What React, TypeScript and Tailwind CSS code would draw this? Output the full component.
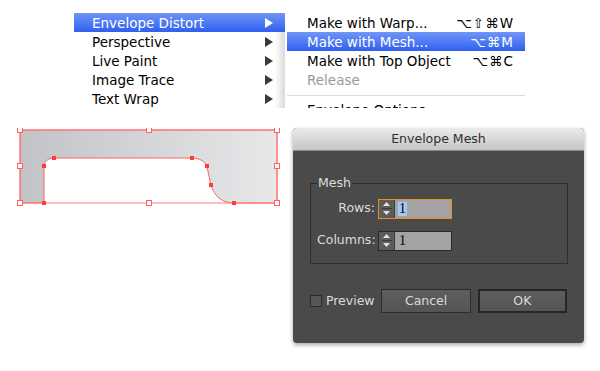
import React from "react";

const leftItems = ["Envelope Distort", "Perspective", "Live Paint", "Image Trace", "Text Wrap"];

const subItems = [
    { label: "Make with Warp...", keys: "⌥⇧⌘W" },
    { label: "Make with Mesh...", keys: "⌥⌘M", active: true },
    { label: "Make with Top Object", keys: "⌥⌘C" },
    { label: "Release", keys: "", disabled: true },
];

const Arrow = ({ white }: { white?: boolean }) => (
    <svg width="8" height="10" viewBox="0 0 8 10">
        <path d="M0 0 L8 5 L0 10 Z" fill={white ? "#ffffff" : "#3a3a3a"} />
    </svg>
);

const Spinner = ({ value, focused }: { value: string; focused?: boolean }) => (
    <div
        className={`flex h-[20px] w-[74px] border ${
            focused ? "border-[#e8901e]" : "border-[#2a2a2a]"
        }`}
    >
        <div className="flex w-[16px] flex-col items-center justify-center gap-[2px] border-r border-[#3a3a3a] bg-[#5c5c5c]">
            <svg width="7" height="4" viewBox="0 0 7 4">
                <path d="M0 4 L3.5 0 L7 4 Z" fill="#e4e4e4" />
            </svg>
            <div className="h-px w-[10px] bg-[#3c3c3c]" />
            <svg width="7" height="4" viewBox="0 0 7 4">
                <path d="M0 0 L3.5 4 L7 0 Z" fill="#e4e4e4" />
            </svg>
        </div>
        <div className="flex flex-1 items-center bg-[#a3a3a3] pl-[3px] font-['Liberation_Serif',serif] text-[14px] leading-none text-black">
            <span className={focused ? "bg-[#a8c6f4] px-px" : "px-px"}>{value}</span>
        </div>
    </div>
);

const Button = ({ label, primary }: { label: string; primary?: boolean }) => (
    <div
        className={`flex h-[24px] w-[90px] items-center justify-center bg-linear-to-b from-[#5e5e5e] to-[#545454] text-[12.5px] text-[#dcdcdc] ${
            primary ? "border-2 border-[#262626]" : "border border-[#2c2c2c]"
        }`}
    >
        {label}
    </div>
);

export default function App() {
    return (
        <div className="flex h-[371px] w-[600px] flex-col overflow-hidden bg-white font-['DejaVu_Sans',sans-serif]">
            {/* menus */}
            <div className="flex h-[108px] shrink-0 overflow-hidden pl-[74px] pt-[13px] text-[13.5px] text-black">
                <div className="relative w-[211px]">
                    {leftItems.map((item, i) => (
                        <div
                            key={item}
                            className={`flex h-[19px] items-center justify-between pl-[18px] pr-[12px] pt-px ${
                                i === 0 ? "bg-linear-to-b from-[#7195f7] to-[#2f5fee] text-white" : ""
                            }`}
                        >
                            <span>{item}</span>
                            <Arrow white={i === 0} />
                        </div>
                    ))}
                    <div className="absolute bottom-0 right-0 top-[19px] w-[10px] bg-linear-to-r from-transparent to-black/15" />
                </div>
                <div className="w-[240px] pl-[2px]">
                    {subItems.map((item) => (
                        <div
                            key={item.label}
                            className={`flex h-[19px] items-center justify-between pl-[20px] pr-[11px] pt-px ${
                                item.active ? "bg-linear-to-b from-[#7195f7] to-[#2f5fee] text-white" : ""
                            } ${item.disabled ? "text-[#9a9a9a]" : ""}`}
                        >
                            <span>{item.label}</span>
                            <span className="tracking-[1px]">{item.keys}</span>
                        </div>
                    ))}
                    <div className="flex h-[12px] items-center">
                        <div className="h-px w-full bg-[#dadada]" />
                    </div>
                    <div className="flex h-[19px] items-center pl-[20px]">Envelope Options...</div>
                </div>
            </div>

            <div className="mt-[20px] flex">
                {/* envelope shape */}
                <svg width="293" height="90" viewBox="0 128 293 90" className="shrink-0">
                    <defs>
                        <linearGradient id="g" x1="0" x2="1" y1="0" y2="0">
                            <stop offset="0" stopColor="#c1c3c6" />
                            <stop offset="1" stopColor="#e7e8ea" />
                        </linearGradient>
                    </defs>
                    <path
                        d="M20 130 H277 V203 H234 C222 203 214 196 211 185 L207 167 C205 161 199 158 192 158 H54 C48 158 44 162 44 166 V203 H20 Z"
                        fill="url(#g)"
                        stroke="#ff6060"
                        strokeWidth="1"
                    />
                    <rect x="20" y="130" width="257" height="73" fill="none" stroke="#ff7a7a" strokeWidth="1" />
                    {[
                        [20, 130], [149, 130], [277, 130],
                        [20, 166], [277, 166],
                        [20, 203], [149, 203], [277, 203],
                    ].map(([x, y]) => (
                        <rect key={`h${x}-${y}`} x={x - 2.5} y={y - 2.5} width="5" height="5" fill="#fff" stroke="#ff6060" strokeWidth="1" />
                    ))}
                    {[
                        [54, 158], [192, 158], [207, 166], [211, 185], [234, 203], [44, 166], [44, 203],
                    ].map(([x, y]) => (
                        <rect key={`a${x}-${y}`} x={x - 2} y={y - 2} width="4" height="4" fill="#ff3c3c" />
                    ))}
                </svg>

                {/* dialog */}
                <div className="flex h-[215px] w-[291px] flex-col overflow-hidden rounded-[4px] bg-[#4a4a4a] shadow-[0_2px_4px_rgba(0,0,0,0.35)]">
                    <div className="flex h-[23px] shrink-0 items-center justify-center border-b border-[#8a8a8a] bg-linear-to-b from-[#ebebeb] to-[#c6c6c6] text-[12.5px] text-[#2e2e2e]">
                        Envelope Mesh
                    </div>
                    <div className="flex flex-col px-[17px] pt-[23px] text-[12.5px] text-[#dcdcdc]">
                        <fieldset className="h-[90px] w-[258px] border border-[#2e2e2e] pl-[6px]">
                            <legend className="px-px text-[12.5px] text-[#dedede]">Mesh</legend>
                            <div className="flex flex-col gap-[12px] pt-[6px]">
                                <div className="flex items-center gap-[3px]">
                                    <span className="w-[58px] text-right">Rows:</span>
                                    <Spinner value="1" focused />
                                </div>
                                <div className="flex items-center gap-[3px]">
                                    <span className="w-[58px] text-right">Columns:</span>
                                    <Spinner value="1" />
                                </div>
                            </div>
                        </fieldset>
                        <div className="mt-[25px] flex items-center">
                            <div className="h-[12px] w-[12px] border border-[#2a2a2a] bg-[#575757]" />
                            <span className="ml-[4px] w-[56px]">Preview</span>
                            <Button label="Cancel" />
                            <div className="w-[7px]" />
                            <Button label="OK" primary />
                        </div>
                    </div>
                </div>
            </div>
        </div>
    );
}
